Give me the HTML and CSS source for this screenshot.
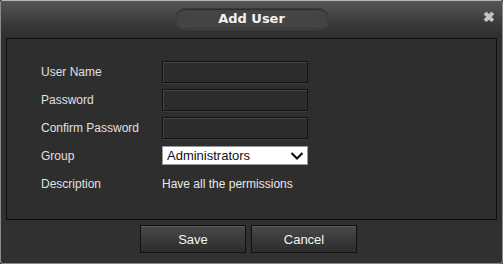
FILE: index.html
```html
<!DOCTYPE html>
<html lang="en">
  <head>
    <meta charset="UTF-8" />
    <title>Add User</title>
    <link rel="stylesheet" href="styles.css">
  </head>
  <body>
    <div class="dialog">
      <!-- Title bar -->
      <div class="titlebar">
        <div class="title">Add User</div>
        <span class="close">&#10006;</span>
      </div>

      <div class="panel">
        <div class="row">
          <label>User Name</label>
          <input type="text" />
        </div>
        <div class="row">
          <label>Password</label>
          <input type="password" />
        </div>
        <div class="row">
          <label>Confirm Password</label>
          <input type="password" />
        </div>
        <div class="row">
          <label>Group</label>
          <div class="select">
            <span>Administrators</span>
            <svg width="14" height="10" viewBox="0 0 14 10">
              <polyline points="1.5,2 7,7.5 12.5,2" fill="none" stroke="#111" stroke-width="2.2" />
            </svg>
          </div>
        </div>
        <div class="row">
          <label>Description</label>
          <span class="desc">Have all the permissions</span>
        </div>
      </div>

      <div class="buttons">
        <button>Save</button>
        <button>Cancel</button>
      </div>
    </div>
  </body>
</html>
```

FILE: styles.css
```css
* {
  margin: 0;
  padding: 0;
  box-sizing: border-box;
  font-family: "Liberation Sans", Arial, sans-serif;
}

body {
  width: 503px;
  height: 264px;
  background: #2f2f2f;
}

.dialog {
  width: 503px;
  height: 264px;
  border: 1px solid #8a8a8a;
  border-top-color: #b5b5b5;
  border-radius: 3px;
  background: #303030;
  display: flex;
  flex-direction: column;
}

.titlebar {
  height: 37px;
  background: linear-gradient(#565656, #3a3a3a 60%, #2f2f2f);
  display: flex;
  justify-content: center;
  padding-top: 7px;
  position: relative;
}

.title {
  width: 154px;
  height: 21px;
  border-radius: 10px;
  background: #444;
  border: 1px solid #3a3a3a;
  box-shadow: inset 0 1px 1px rgba(0, 0, 0, 0.35), 0 1px 0 rgba(255, 255, 255, 0.08);
  color: #f2f2f2;
  font-family: "DejaVu Sans", sans-serif;
  font-weight: bold;
  font-size: 13px;
  line-height: 19px;
  text-align: center;
}

.close {
  position: absolute;
  right: 7px;
  top: 8px;
  color: #c4c4c4;
  font-size: 14px;
  font-weight: bold;
  text-shadow: 0 0 1px #777;
}

.panel {
  margin: 0 5px;
  height: 182px;
  border: 1px solid #0e0e0e;
  background: #2e2e2e;
  padding: 22px 0 0 34px;
  display: flex;
  flex-direction: column;
  gap: 7px;
}

.row {
  display: flex;
  align-items: center;
  height: 21px;
}

label {
  width: 121px;
  color: #e0e0e0;
  font-size: 12px;
}

input {
  width: 146px;
  height: 22px;
  background: #2c2c2c;
  border: 1px solid #141414;
  box-shadow: inset 1px 1px 0 #444, 0 1px 0 #3c3c3c;
  outline: none;
}

.select {
  width: 146px;
  height: 19px;
  background: #fff;
  border: 1px solid #999;
  display: flex;
  align-items: center;
  justify-content: space-between;
  padding: 0 3px 0 4px;
  color: #111;
  font-size: 13px;
}

.desc {
  color: #e8e8e8;
  font-size: 12px;
}

.buttons {
  display: flex;
  gap: 5px;
  padding: 5px 0 0 139px;
}

button {
  width: 106px;
  height: 28px;
  border: 1px solid #111;
  background: linear-gradient(#4a4a4a, #3a3a3a 50%, #2c2c2c);
  box-shadow: inset 0 1px 0 #5a5a5a;
  color: #f4f4f4;
  font-size: 13px;
}
```
